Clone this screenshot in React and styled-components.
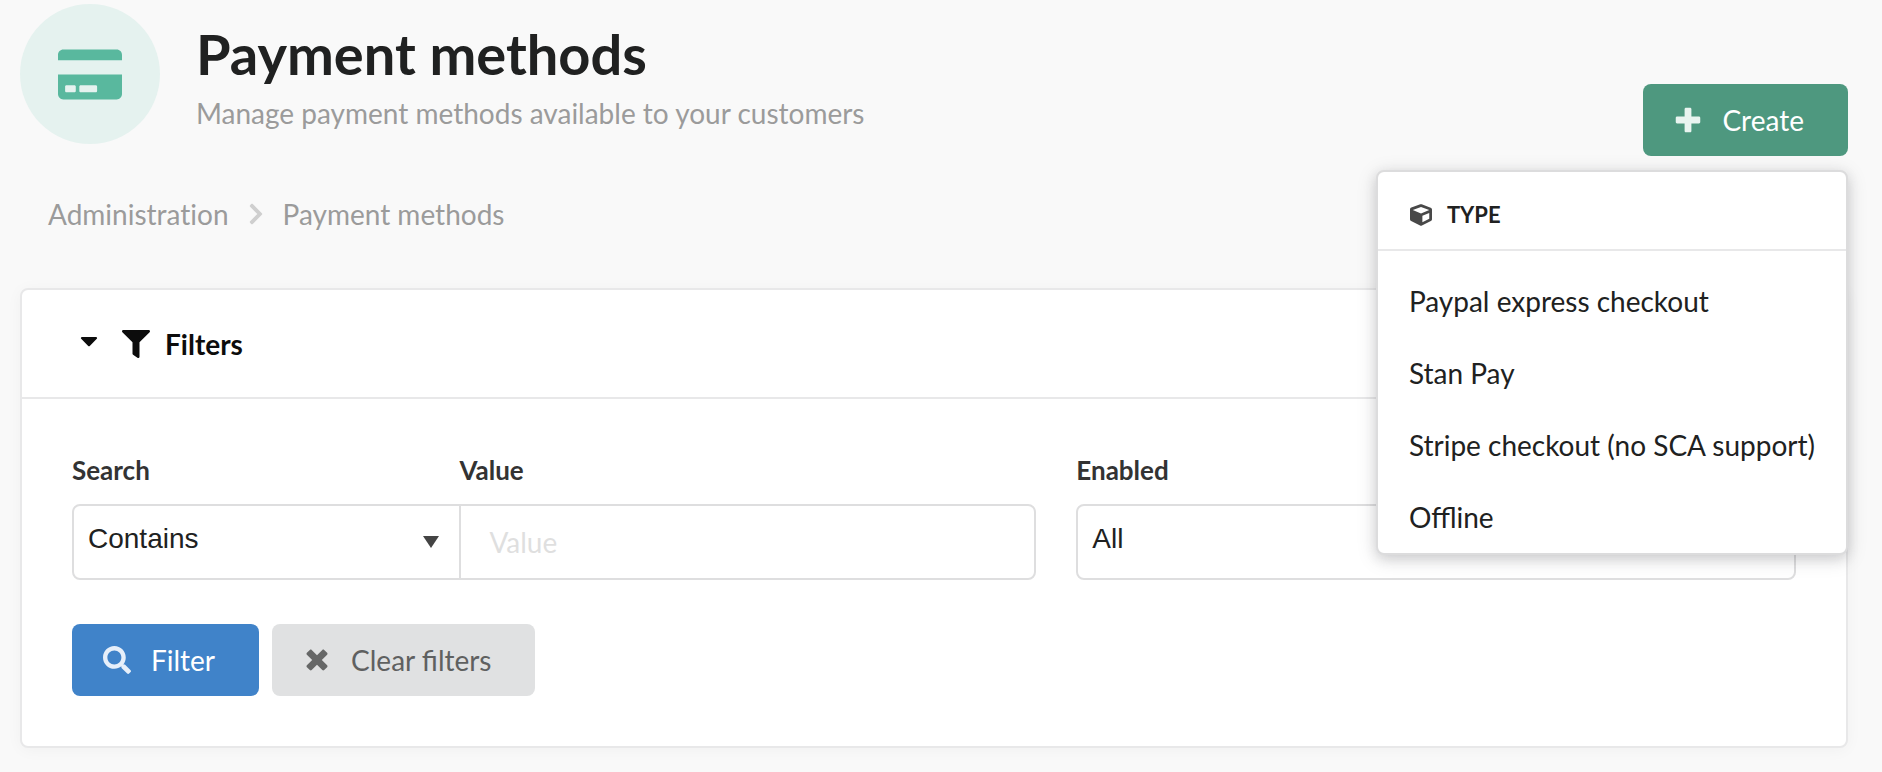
import React from 'react';
import styled, { createGlobalStyle } from 'styled-components';
import { FaCaretDown, FaChevronRight, FaCreditCard, FaCube, FaFilter, FaSearch } from 'react-icons/fa';

const GlobalStyle = createGlobalStyle`
  *, *::before, *::after { box-sizing: border-box; }
  body {
    margin: 0;
    background: #f9f9f9;
    color: #202121;
    font-family: Lato, 'Liberation Sans', sans-serif;
    font-size: 28px;
    line-height: 34px;
  }
  button, input, select { font: inherit; color: inherit; margin: 0; }
`;

const Page = styled.main`
  padding: 4px 34px 24px 20px;
`;

const Header = styled.header`
  display: flex;
  align-items: flex-start;
  gap: 36px;
  min-height: 152px;
`;

const HeaderIcon = styled.div`
  display: flex;
  align-items: center;
  justify-content: center;
  flex: none;
  width: 140px;
  height: 140px;
  border-radius: 50%;
  background: #e5f2ef;
  color: #59b89e;

  svg { width: 64px; height: 57px; }
`;

const Heading = styled.div`
  flex: 1;
  padding-top: 16px;
`;

const Title = styled.h1`
  margin: 0 0 8px;
  font-size: 56px;
  line-height: 68px;
  font-weight: 700;
`;

const Subtitle = styled.p`
  margin: 0;
  color: #9b9b9b;
`;

const CreateDropdown = styled.div`
  position: relative;
  align-self: flex-end;
`;

const tones = {
  primary: { background: '#4e987f', color: '#ffffff', icon: '#e9f4f0' },
  info: { background: '#4083c9', color: '#ffffff', icon: '#e6effa' },
  neutral: { background: '#e0e1e2', color: '#5f6060', icon: '#666767' },
};

const Button = styled.button`
  display: flex;
  align-items: center;
  gap: 17px;
  height: 72px;
  padding: 0 44px 0 28px;
  border: 0;
  border-radius: 8px;
  background: ${({ $tone }) => tones[$tone].background};
  color: ${({ $tone }) => tones[$tone].color};
  cursor: pointer;

  svg {
    width: 34px;
    height: 28px;
    color: ${({ $tone }) => tones[$tone].icon};
  }
`;

const Menu = styled.div`
  position: absolute;
  z-index: 2;
  top: calc(100% + 14px);
  right: 0;
  border: 2px solid #dcdcdd;
  border-radius: 8px;
  background: #ffffff;
  box-shadow: 0 4px 12px rgba(34, 36, 38, 0.12), 0 4px 20px rgba(34, 36, 38, 0.15);
  white-space: nowrap;
`;

const MenuHeader = styled.div`
  display: flex;
  align-items: center;
  gap: 14px;
  padding: 29px 31px 20px;
  border-bottom: 2px solid #e8e8e9;
  font-size: 22px;
  line-height: 28px;
  font-weight: 700;
  text-transform: uppercase;

  svg { width: 24px; height: 22px; color: #484848; }
`;

const MenuList = styled.ul`
  margin: 0;
  padding: 14px 0 0;
  list-style: none;
`;

const MenuLink = styled.a`
  display: block;
  padding: 19px 31px;
  color: inherit;
  text-decoration: none;
`;

const Breadcrumb = styled.nav`
  display: flex;
  align-items: center;
  gap: 19px;
  margin: 41px 0 57px;
  padding-left: 28px;
  color: #9b9b9b;
  font-variant-ligatures: no-common-ligatures;

  a { color: inherit; text-decoration: none; }
  svg { width: 16px; height: 24px; color: #cfcfcf; }
`;

const Panel = styled.section`
  border: 2px solid #e8e8e9;
  border-radius: 8px;
  background: #ffffff;
  box-shadow: 0 2px 16px rgba(34, 36, 38, 0.04);
`;

const PanelToggle = styled.button`
  display: flex;
  align-items: center;
  width: 100%;
  height: 109px;
  padding: 0 58px;
  border: 0;
  border-bottom: 2px solid #e8e8e9;
  background: none;
  color: #0c0c0c;
  font-weight: 700;
  cursor: pointer;

  svg { height: 28px; }
  svg:first-child { width: 18px; margin-right: 24px; }
  svg + svg { width: 28px; margin-right: 15px; }
`;

const FilterForm = styled.form`
  padding: 55px 50px 50px;
`;

const FilterGrid = styled.div`
  display: grid;
  grid-template-columns: 67fr 50fr;
  gap: 40px;
`;

const JoinedFields = styled.div`
  display: grid;
  grid-template-columns: 21fr 31fr;

  > :first-child select { border-radius: 8px 0 0 8px; }
  > :last-child { margin-left: -2px; }
  > :last-child input { border-radius: 0 8px 8px 0; }
`;

const Field = styled.div`
  display: flex;
  flex-direction: column;
  gap: 18px;
  min-width: 0;
`;

const Label = styled.label`
  color: #333333;
  font-size: 26px;
  line-height: 32px;
  font-weight: 700;
`;

const SelectBox = styled.div`
  position: relative;

  svg {
    position: absolute;
    top: 32px;
    right: 22px;
    width: 16px;
    height: 12px;
    fill: #444444;
    pointer-events: none;
  }
`;

const Select = styled.select`
  display: block;
  appearance: none;
  width: 100%;
  height: 76px;
  padding: 0 48px 6px 14px;
  border: 2px solid #dededf;
  border-radius: 8px;
  background: #ffffff;
  font-family: 'Liberation Sans', Arial, sans-serif;
`;

const TextInput = styled.input`
  width: 100%;
  height: 76px;
  padding: 0 28px;
  border: 2px solid #dededf;
  border-radius: 8px;
  background: #ffffff;

  &::placeholder { color: #dfdfdf; opacity: 1; }
`;

const Actions = styled.div`
  display: flex;
  gap: 13px;
  margin-top: 44px;
`;

const PlusIcon = () => (
  <svg viewBox="0 0 448 512" fill="currentColor" aria-hidden="true">
    <path d="M448 294.2v-76.4c0-13.3-10.7-24-24-24H286.2V56c0-13.3-10.7-24-24-24h-76.4c-13.3 0-24 10.7-24 24v137.8H24c-13.3 0-24 10.7-24 24v76.4c0 13.3 10.7 24 24 24h137.8V456c0 13.3 10.7 24 24 24h76.4c13.3 0 24-10.7 24-24V318.2H424c13.3 0 24-10.7 24-24z" />
  </svg>
);

const RemoveIcon = () => (
  <svg viewBox="0 0 384 512" fill="currentColor" aria-hidden="true">
    <path d="M323.1 441l53.9-53.9c9.4-9.4 9.4-24.5 0-33.9L279.8 256l97.2-97.2c9.4-9.4 9.4-24.5 0-33.9L323.1 71c-9.4-9.4-24.5-9.4-33.9 0L192 168.2 94.8 71c-9.4-9.4-24.5-9.4-33.9 0L7 124.9c-9.4 9.4-9.4 24.5 0 33.9l97.2 97.2L7 353.2c-9.4 9.4-9.4 24.5 0 33.9L60.9 441c9.4 9.4 24.5 9.4 33.9 0l97.2-97.2 97.2 97.2c9.3 9.3 24.5 9.3 33.9 0z" />
  </svg>
);

const SelectArrow = () => (
  <svg viewBox="0 0 16 12" aria-hidden="true">
    <path d="M0 0h16L8 12z" />
  </svg>
);

const paymentTypes = ['Paypal express checkout', 'Stan Pay', 'Stripe checkout (no SCA support)', 'Offline'];

function SelectField({ id, label, options }) {
  return (
    <Field>
      <Label htmlFor={id}>{label}</Label>
      <SelectBox>
        <Select id={id} defaultValue={options[0]}>
          {options.map((option) => (
            <option key={option}>{option}</option>
          ))}
        </Select>
        <SelectArrow />
      </SelectBox>
    </Field>
  );
}

export default function App() {
  return (
    <>
      <GlobalStyle />
      <Page>
        <Header>
          <HeaderIcon><FaCreditCard /></HeaderIcon>
          <Heading>
            <Title>Payment methods</Title>
            <Subtitle>Manage payment methods available to your customers</Subtitle>
          </Heading>
          <CreateDropdown>
            <Button type="button" $tone="primary" aria-haspopup="true" aria-expanded="true">
              <PlusIcon />
              Create
            </Button>
            <Menu>
              <MenuHeader><FaCube />Type</MenuHeader>
              <MenuList>
                {paymentTypes.map((type) => (
                  <li key={type}><MenuLink href="#">{type}</MenuLink></li>
                ))}
              </MenuList>
            </Menu>
          </CreateDropdown>
        </Header>

        <Breadcrumb aria-label="Breadcrumb">
          <a href="#">Administration</a>
          <FaChevronRight />
          <span aria-current="page">Payment methods</span>
        </Breadcrumb>

        <Panel>
          <PanelToggle type="button" aria-expanded="true">
            <FaCaretDown viewBox="0 64 320 512" />
            <FaFilter />
            Filters
          </PanelToggle>
          <FilterForm onSubmit={(event) => event.preventDefault()}>
            <FilterGrid>
              <JoinedFields>
                <SelectField id="search-type" label="Search" options={['Contains', 'Equal', 'Starts with', 'Ends with']} />
                <Field>
                  <Label htmlFor="search-value">Value</Label>
                  <TextInput id="search-value" type="text" placeholder="Value" />
                </Field>
              </JoinedFields>
              <SelectField id="enabled" label="Enabled" options={['All', 'Yes', 'No']} />
            </FilterGrid>
            <Actions>
              <Button type="submit" $tone="info"><FaSearch />Filter</Button>
              <Button type="reset" $tone="neutral"><RemoveIcon />Clear filters</Button>
            </Actions>
          </FilterForm>
        </Panel>
      </Page>
    </>
  );
}
